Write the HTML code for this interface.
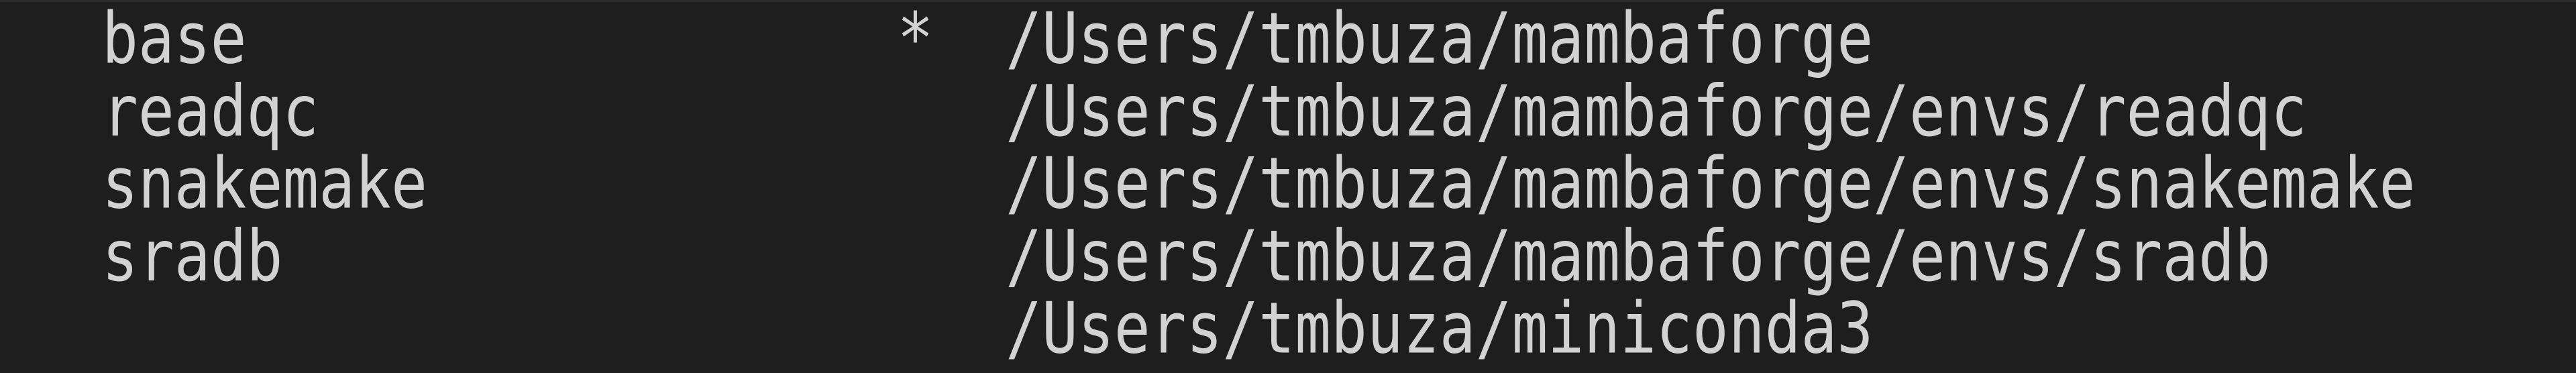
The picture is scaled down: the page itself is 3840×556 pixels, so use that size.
<!DOCTYPE html>
<html><head><meta charset="utf-8"><style>
html,body{margin:0;padding:0;background:#1e1e1e;width:3840px;height:556px;overflow:hidden}
.t{position:absolute;left:152px;top:5px;margin:0;font-family:"DejaVu Sans Mono","Liberation Mono",monospace;font-size:89.5px;line-height:91.5px;color:#d2d2d2;white-space:pre;transform:scaleY(1.18);transform-origin:0 0}
.top{position:absolute;left:0;top:0;width:3840px;height:3px;background:#2c2c2c}
</style></head><body>
<div class="top"></div>
<pre class="t">base                  *  /Users/tmbuza/mambaforge
readqc                   /Users/tmbuza/mambaforge/envs/readqc
snakemake                /Users/tmbuza/mambaforge/envs/snakemake
sradb                    /Users/tmbuza/mambaforge/envs/sradb
                         /Users/tmbuza/miniconda3</pre>
</body></html>
